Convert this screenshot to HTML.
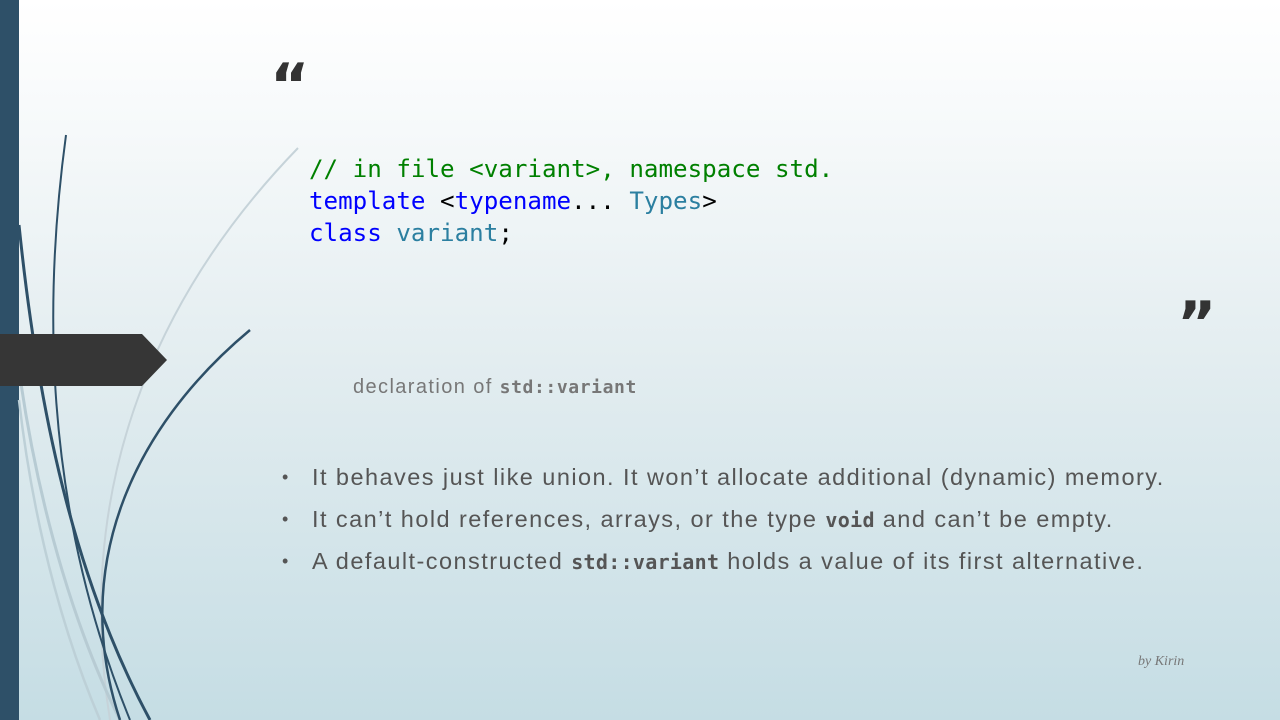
<!DOCTYPE html>
<html><head><style>
body{margin:0;width:1280px;height:720px;overflow:hidden;position:relative;background:linear-gradient(#ffffff 0%,#f6f9fa 18%,#e3edf0 50%,#c5dde4 100%);font-family:"Liberation Sans",sans-serif}
.bar{position:absolute;left:0;top:0;width:19px;height:720px;background:#2e5068}
.q{position:absolute;font-family:"DejaVu Sans",sans-serif;font-weight:bold;font-size:60px;color:#333;line-height:1}
.code{position:absolute;left:309px;top:153px;font-family:"DejaVu Sans Mono","Liberation Mono",monospace;font-size:24.2px;line-height:32px;white-space:pre;color:#000}
.g{color:#008000}.b{color:#0000ff}.t{color:#2b7fa0}
.cap{position:absolute;left:353px;top:376px;font-size:20px;letter-spacing:1.4px;color:#777;white-space:nowrap}
.cap code{font-family:"DejaVu Sans Mono","Liberation Mono",monospace;font-weight:bold;font-size:18px;letter-spacing:0.6px}
.bl code{font-family:"DejaVu Sans Mono","Liberation Mono",monospace;font-size:20px;letter-spacing:0.3px;font-weight:bold}
.bl{position:absolute;left:282px;top:456px;font-size:23.5px;letter-spacing:1.45px;color:#555;white-space:nowrap}
.bl div{position:relative;padding-left:30px;height:42px;line-height:42px}
.bl div:before{content:"•";position:absolute;left:0;font-size:18px}
.sig{position:absolute;left:1138px;top:654px;font-family:"Liberation Serif",serif;font-style:italic;font-size:14px;color:#777}
</style></head><body>
<div class="bar"></div>
<svg width="1280" height="720" style="position:absolute;left:0;top:0">
<g fill="none">
<path d="M298,148 C170,280 70,470 110,720" stroke="#c6d3d9" stroke-width="2"/>
<path d="M19,370 C40,520 80,640 120,720" stroke="#b7cbd3" stroke-width="3"/>
<path d="M19,400 C35,540 70,650 100,720" stroke="#bdd0d7" stroke-width="2.5"/>
<path d="M66,135 C45,290 40,500 130,720" stroke="#2e5068" stroke-width="2"/>
<path d="M19,225 C40,430 80,590 150,720" stroke="#2e5068" stroke-width="3"/>
<path d="M250,330 C130,430 70,570 120,720" stroke="#2e5068" stroke-width="2.5"/>
</g>
<polygon points="0,334 142,334 167,360 142,386 0,386" fill="#363636"/>
</svg>
<div class="q" style="left:270px;top:56px">“</div>
<div class="q" style="left:1177px;top:294px">”</div>
<div class="code"><span class="g">// in file &lt;variant&gt;, namespace std.</span>
<span class="b">template</span> &lt;<span class="b">typename</span>... <span class="t">Types</span>&gt;
<span class="b">class</span> <span class="t">variant</span>;</div>
<div class="cap">declaration of <code>std::variant</code></div>
<div class="bl">
<div>It behaves just like union. It won’t allocate additional (dynamic) memory.</div>
<div>It can’t hold references, arrays, or the type <code>void</code> and can’t be empty.</div>
<div>A default-constructed <code>std::variant</code> holds a value of its first alternative.</div>
</div>
<div class="sig">by Kirin</div>
</body></html>
